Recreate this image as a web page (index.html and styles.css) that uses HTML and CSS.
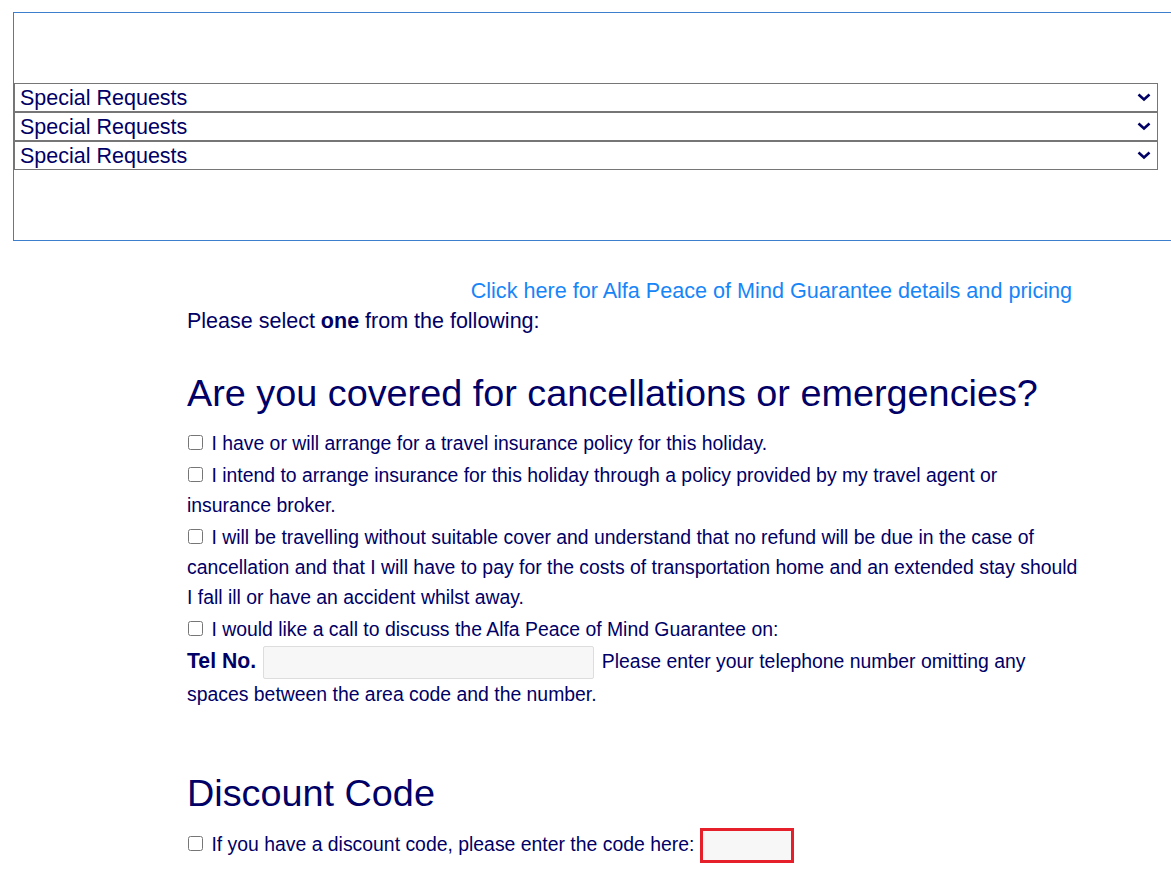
FILE: index.html
```html
<!DOCTYPE html>
<html lang="en">
<head>
    <meta charset="UTF-8">
    <meta name="viewport" content="width=device-width, initial-scale=1.0">
    <title>Booking Extras</title>
    <link rel="stylesheet" href="styles.css">
</head>
<body>

    <div class="requests-box">
        <select class="request-select">
            <option>Special Requests</option>
        </select>
        <select class="request-select">
            <option>Special Requests</option>
        </select>
        <select class="request-select">
            <option>Special Requests</option>
        </select>
    </div>

    <div class="content">
        <div class="guarantee-link">
            <a href="#">Click here for Alfa Peace of Mind Guarantee details and pricing</a>
        </div>
        <p class="intro">Please select <b>one</b> from the following:</p>

        <h2>Are you covered for cancellations or emergencies?</h2>

        <div class="option">
            <input type="checkbox" id="opt1"> <label for="opt1">I have or will arrange for a travel insurance policy for this holiday.</label>
        </div>
        <div class="option">
            <input type="checkbox" id="opt2"> <label for="opt2">I intend to arrange insurance for this holiday through a policy provided by my travel agent or insurance broker.</label>
        </div>
        <div class="option">
            <input type="checkbox" id="opt3"> <label for="opt3">I will be travelling without suitable cover and understand that no refund will be due in the case of cancellation and that I will have to pay for the costs of transportation home and an extended stay should I fall ill or have an accident whilst away.</label>
        </div>
        <div class="option">
            <input type="checkbox" id="opt4"> <label for="opt4">I would like a call to discuss the Alfa Peace of Mind Guarantee on:</label>
        </div>
        <div class="option tel-row">
            <b class="tel-label">Tel No.</b> <input type="text" class="tel-input"> Please enter your telephone number omitting any spaces between the area code and the number.
        </div>

        <h2 class="discount-title">Discount Code</h2>
        <div class="option discount-row">
            <input type="checkbox" id="discount"> <label for="discount">If you have a discount code, please enter the code here:</label>
            <input type="text" class="discount-input">
        </div>
    </div>

</body>
</html>
```

FILE: styles.css
```css
html, body {
    overflow-x: hidden;
}
body {
    font-family: Arial, "Liberation Sans", sans-serif;
    color: #000066;
    background: white;
    margin: 0;
    padding: 12px 0 0 13px;
}
.requests-box {
    width: 1200px;
    border: 1px solid #3d7fcc;
    padding: 70px 0;
}
.request-select {
    display: block;
    width: 1144px;
    height: 29px;
    font-family: Arial, "Liberation Sans", sans-serif;
    font-size: 21.5px;
    color: #000066;
    background: white url("data:image/svg+xml,%3Csvg xmlns='http://www.w3.org/2000/svg' width='14' height='9' viewBox='0 0 14 9'%3E%3Cpath d='M1.5 1.5 L7 6.5 L12.5 1.5' fill='none' stroke='%23000066' stroke-width='2.6'/%3E%3C/svg%3E") no-repeat right 6px center;
    -webkit-appearance: none;
    appearance: none;
    border: 1px solid #767676;
    border-radius: 0;
    padding: 0 0 0 5px;
    margin: 0;
}
.content {
    margin-left: 174px;
    width: 893px;
    font-size: 19.4px;
    line-height: 30px;
}
.guarantee-link {
    margin-top: 35px;
    text-align: right;
    padding-right: 8px;
    font-size: 21.6px;
}
.guarantee-link a {
    color: #1685f8;
    text-decoration: none;
}
.intro {
    margin: 0;
    font-size: 21.5px;
}
h2 {
    font-size: 37.8px;
    font-weight: normal;
    margin: 35px 0 13px;
    line-height: 44px;
}
.option {
    margin-bottom: 2px;
}
.option input[type="checkbox"] {
    margin: 0 3px 0 1px;
    width: 15px;
    height: 15px;
}
.tel-label {
    font-size: 21.2px;
}
.tel-input {
    width: 331px;
    height: 33px;
    box-sizing: border-box;
    background: #f7f7f7;
    border: 1px solid #dddddd;
    border-radius: 2px;
    vertical-align: middle;
    margin: 0 2px;
}
.discount-title {
    margin-top: 62px;
}
.discount-input {
    width: 94px;
    height: 35px;
    box-sizing: border-box;
    background: #f7f7f7;
    border: 3px solid #e6202a;
    vertical-align: middle;
}
```
